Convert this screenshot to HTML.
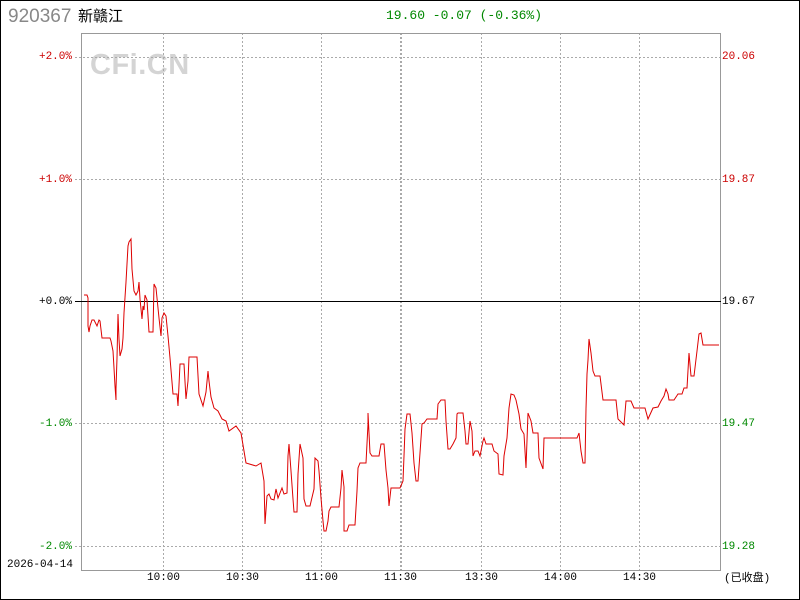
<!DOCTYPE html>
<html><head><meta charset="utf-8"><style>
body{margin:0;background:#fff}
#w{position:relative;width:798px;height:598px;border:1px solid #000;overflow:hidden;font-family:"Liberation Mono","Noto Sans CJK SC",monospace;}
.t{position:absolute;font-size:11px;line-height:12px;white-space:nowrap}
.l{right:727px;text-align:right}
.r{left:721px}
.red{color:#c00}.grn{color:#080}
</style></head><body><div id="w">
<div class="t" style="left:7px;top:6px;font-family:'Liberation Sans',sans-serif;font-size:19px;line-height:20px;color:#888">920367</div>
<div class="t" style="left:77px;top:6px;font-family:'Liberation Sans','Noto Sans CJK SC',sans-serif;font-size:15px;line-height:20px;color:#000">新赣江</div>
<div class="t grn" style="left:385px;top:7px;font-size:13px;line-height:16px">19.60 -0.07 (-0.36%)</div>
<div class="t" style="left:89px;top:48px;font-family:'Liberation Sans',sans-serif;font-weight:bold;font-size:29px;line-height:32px;color:#d4d4d4;letter-spacing:0.5px">CFi.CN</div>
<svg style="position:absolute;left:0;top:0" width="800" height="600">
<g stroke="#aaa" stroke-dasharray="2,2" stroke-width="1">
<line x1="74" y1="56.5" x2="720" y2="56.5"/><line x1="74" y1="178.5" x2="720" y2="178.5"/><line x1="74" y1="422.5" x2="720" y2="422.5"/><line x1="74" y1="545.5" x2="720" y2="545.5"/>
<line x1="162.5" y1="32" x2="162.5" y2="570"/><line x1="241.5" y1="32" x2="241.5" y2="570"/><line x1="320.5" y1="32" x2="320.5" y2="570"/><line x1="399.5" y1="32" x2="399.5" y2="570"/><line x1="400.5" y1="32" x2="400.5" y2="570"/><line x1="480.5" y1="32" x2="480.5" y2="570"/><line x1="559.5" y1="32" x2="559.5" y2="570"/><line x1="638.5" y1="32" x2="638.5" y2="570"/>
</g>
<rect x="80.5" y="32.5" width="639" height="537" fill="none" stroke="#999"/>
<line x1="74" y1="300.5" x2="720" y2="300.5" stroke="#000"/>
<polyline fill="none" stroke="#d00" stroke-width="1" points="83,294 86,294 87,297 87,325 88,331 89,325 91,319 93,319 96,325 98,319 99,320 101,337 109,337 110,340 112,350 113,367 114,385 115,399 115,388 116,357 117,313 118,338 119,355 121,348 122,337 123,312 125,281 127,245 128,241 130,238 131,268 133,290 135,294 137,290 138,281 139,298 141,318 142,305 143,309 144,294 146,299 148,331 152,331 153,283 155,287 156,297 158,317 160,335 161,317 163,312 165,315 167,335 169,357 172,393 176,393 177,405 179,363 183,363 185,398 187,380 188,356 196,356 198,393 202,405 205,391 207,370 208,380 210,396 213,407 217,410 221,418 225,420 228,430 235,425 240,432 245,462 255,465 260,462 263,480 264,523 266,495 268,493 270,498 273,499 275,488 277,497 281,487 283,493 286,492 287,455 288,443 290,470 292,498 293,511 296,511 297,473 299,443 302,457 303,498 305,505 309,505 313,488 314,457 317,460 318,470 320,497 322,520 323,530 325,530 327,520 328,510 330,506 338,506 340,487 341,469 343,486 343,530 346,530 348,524 354,524 356,490 357,467 359,462 365,462 367,423 367,412 369,452 371,455 378,455 380,443 383,443 385,469 387,487 388,505 390,487 392,487 399,487 402,480 403,455 404,428 406,413 409,413 411,432 413,462 415,480 417,480 419,452 421,423 423,422 426,418 436,418 437,403 440,399 444,399 445,420 447,448 449,448 452,443 455,437 456,413 457,412 462,412 464,430 465,443 467,443 469,420 471,430 472,455 474,450 477,450 479,455 482,440 483,437 485,443 491,443 493,450 497,453 498,473 502,474 503,455 506,437 508,407 510,393 513,394 515,399 518,413 520,428 523,433 525,467 527,412 530,420 532,432 537,432 538,457 542,468 543,437 576,437 578,432 580,450 582,462 584,462 585,408 586,373 587,359 588,338 590,352 592,370 594,375 599,375 602,399 615,399 617,418 623,424 625,400 630,400 633,407 644,407 647,418 652,407 657,406 660,400 663,395 665,388 667,393 668,399 673,399 677,393 681,393 683,387 686,387 688,352 690,375 693,375 696,350 698,333 700,332 702,344 718,344"/>
</svg>
<div class="t l red" style="top:50px">+2.0%</div>
<div class="t l red" style="top:173px">+1.0%</div>
<div class="t l" style="top:295px;color:#000">+0.0%</div>
<div class="t l grn" style="top:417px">-1.0%</div>
<div class="t l grn" style="top:540px">-2.0%</div>
<div class="t r red" style="top:50px">20.06</div>
<div class="t r red" style="top:173px">19.87</div>
<div class="t r" style="top:295px;color:#000">19.67</div>
<div class="t r grn" style="top:417px">19.47</div>
<div class="t r grn" style="top:540px">19.28</div>
<div class="t" style="left:6px;top:558px;color:#000">2026-04-14</div>
<div class="t" style="left:146px;top:571px">10:00</div>
<div class="t" style="left:225px;top:571px">10:30</div>
<div class="t" style="left:304px;top:571px">11:00</div>
<div class="t" style="left:383px;top:571px">11:30</div>
<div class="t" style="left:464px;top:571px">13:30</div>
<div class="t" style="left:543px;top:571px">14:00</div>
<div class="t" style="left:622px;top:571px">14:30</div>
<div class="t" style="left:723px;top:572px">(已收盘)</div>
</div></body></html>
